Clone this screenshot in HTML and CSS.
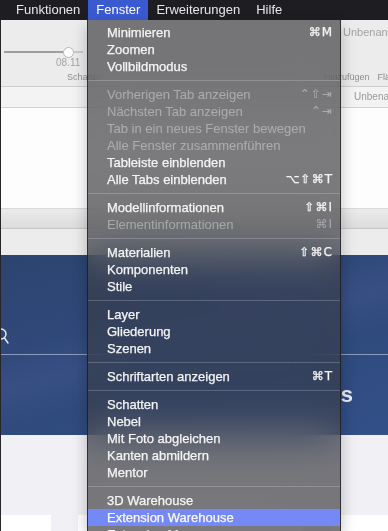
FILE: index.html
```html
<!DOCTYPE html>
<html lang="de">
<head>
    <meta charset="UTF-8">
    <meta name="viewport" content="width=device-width, initial-scale=1.0">
    <title>Fenster</title>
    <link rel="stylesheet" href="styles.css">
</head>
<body>
    <!-- Menüleiste -->
    <div class="menubar">
        <span class="menubar-item">Funktionen</span>
        <span class="menubar-item active">Fenster</span>
        <span class="menubar-item">Erweiterungen</span>
        <span class="menubar-item">Hilfe</span>
    </div>

    <!-- Programmfenster im Hintergrund -->
    <div class="app">
        <div class="toolbar">
            <div class="tool-left">
                <div class="slider">
                    <span class="slider-fill"></span>
                    <span class="slider-knob"></span>
                    <span class="slider-rest"></span>
                </div>
                <div class="slider-value">08.11</div>
                <div class="tool-label">Schatten</div>
            </div>
            <div class="tool-right">
                <div class="window-title">Unbenannt - SketchUp Pro 2019</div>
                <div class="tool-labels">
                    <span>Hinzufügen</span>
                    <span>Flächen</span>
                </div>
            </div>
        </div>

        <div class="tabbar">
            <span class="tab">Unbenannt</span>
        </div>

        <div class="canvas"></div>
        <div class="statusbar"></div>
        <div class="infobar"></div>

        <div class="hero">
            <div class="hero-top">
                <svg class="search-icon" width="12" height="18" viewBox="0 0 12 18">
                    <circle cx="0" cy="6" r="5" fill="none" stroke="#e8ecf5" stroke-width="1.4"/>
                    <line x1="3.5" y1="10" x2="7" y2="15" stroke="#e8ecf5" stroke-width="1.4" stroke-linecap="round"/>
                </svg>
            </div>
            <div class="hero-bottom">
                <span class="hero-title">s</span>
            </div>
        </div>

        <div class="lower">
            <div class="cards">
                <div class="card card-small"></div>
                <div class="card card-wide"></div>
                <div class="card card-side"></div>
            </div>
        </div>
    </div>

    <!-- Geöffnetes Menü "Fenster" -->
    <div class="menu">
        <div class="item"><span>Minimieren</span><span class="key">⌘M</span></div>
        <div class="item"><span>Zoomen</span></div>
        <div class="item"><span>Vollbildmodus</span></div>
        <div class="sep"></div>
        <div class="item disabled"><span>Vorherigen Tab anzeigen</span><span class="key">⌃⇧⇥</span></div>
        <div class="item disabled"><span>Nächsten Tab anzeigen</span><span class="key">⌃⇥</span></div>
        <div class="item disabled"><span>Tab in ein neues Fenster bewegen</span></div>
        <div class="item disabled"><span>Alle Fenster zusammenführen</span></div>
        <div class="item"><span>Tableiste einblenden</span></div>
        <div class="item"><span>Alle Tabs einblenden</span><span class="key">⌥⇧⌘T</span></div>
        <div class="sep"></div>
        <div class="item"><span>Modellinformationen</span><span class="key">⇧⌘I</span></div>
        <div class="item disabled"><span>Elementinformationen</span><span class="key">⌘I</span></div>
        <div class="sep"></div>
        <div class="item"><span>Materialien</span><span class="key">⇧⌘C</span></div>
        <div class="item"><span>Komponenten</span></div>
        <div class="item"><span>Stile</span></div>
        <div class="sep"></div>
        <div class="item"><span>Layer</span></div>
        <div class="item"><span>Gliederung</span></div>
        <div class="item"><span>Szenen</span></div>
        <div class="sep"></div>
        <div class="item"><span>Schriftarten anzeigen</span><span class="key">⌘T</span></div>
        <div class="sep"></div>
        <div class="item"><span>Schatten</span></div>
        <div class="item"><span>Nebel</span></div>
        <div class="item"><span>Mit Foto abgleichen</span></div>
        <div class="item"><span>Kanten abmildern</span></div>
        <div class="item"><span>Mentor</span></div>
        <div class="sep"></div>
        <div class="item"><span>3D Warehouse</span></div>
        <div class="item selected"><span>Extension Warehouse</span></div>
        <div class="item"><span>Extension Manager</span></div>
    </div>
</body>
</html>
```

FILE: styles.css
```css
/* Grundlayout */
* {
    box-sizing: border-box;
}
body {
    margin: 0;
    width: 388px;
    height: 531px;
    overflow: hidden;
    position: relative;
    font-family: "Liberation Sans", "DejaVu Sans", sans-serif;
    background: #f0f0f4;
}

/* Menüleiste */
.menubar {
    height: 20px;
    background: #1d1d22;
    display: flex;
    padding-left: 8px;
    font-size: 13px;
    line-height: 20px;
    color: #e8e8e8;
}
.menubar-item {
    padding: 0 8px;
}
.menubar-item.active {
    background: #3a5bd0;
    color: #fff;
}

/* Programmfenster */
.app {
    display: flex;
    flex-direction: column;
    border-left: 1px solid #26262a;
    height: 511px;
}
.toolbar {
    height: 67px;
    background: #ececec;
    border-bottom: 1px solid #cfcfcf;
    display: flex;
    overflow: hidden;
}
.tool-left {
    width: 90px;
    flex-shrink: 0;
}
.slider {
    display: flex;
    align-items: center;
    height: 12px;
    margin: 26px 0 0 3px;
    width: 79px;
}
.slider-fill {
    width: 59px;
    height: 2px;
    background: #9e9e9e;
}
.slider-knob {
    width: 11px;
    height: 11px;
    border-radius: 50%;
    background: #fff;
    border: 1px solid #b5b5b5;
}
.slider-rest {
    flex: 1;
    height: 2px;
    background: #c9c9c9;
}
.slider-value {
    font-size: 10px;
    line-height: 12px;
    color: #a3a3a3;
    margin: -1px 0 0 55px;
}
.tool-label {
    font-size: 9px;
    line-height: 12px;
    color: #8f8f8f;
    margin: 2px 0 0 66px;
    white-space: nowrap;
}
.tool-right {
    margin-left: auto;
    width: 120px;
    flex-shrink: 0;
    white-space: nowrap;
    overflow: hidden;
}
.window-title {
    font-size: 11px;
    line-height: 16px;
    color: #a2a2a2;
    padding: 4px 0 0 75px;
}
.tool-labels {
    display: flex;
    gap: 8px;
    font-size: 9px;
    line-height: 16px;
    color: #8c8c8c;
    padding: 29px 0 0 56px;
}
.tabbar {
    height: 21px;
    background: #f3f3f3;
    border-bottom: 1px solid #d2d2d2;
    display: flex;
    justify-content: flex-end;
    overflow: hidden;
}
.tab {
    font-size: 10px;
    line-height: 20px;
    color: #9a9a9a;
    width: 34px;
    white-space: nowrap;
    overflow: hidden;
}
.canvas {
    height: 100px;
    background: #fdfdfd;
}
.statusbar {
    height: 21px;
    background: linear-gradient(#ebebeb, #dcdcdc);
    border-top: 1px solid #d9d9d9;
    border-bottom: 1px solid #c7c7c7;
}
.infobar {
    height: 26px;
    background: #ececec;
}

/* Blauer Bereich */
.hero {
    height: 180px;
    background: linear-gradient(165deg, #2b446f 0%, #30497a 35%, #384f84 48%, #2f4a7c 62%, #33508a 100%);
    display: flex;
    flex-direction: column;
}
.hero-top {
    height: 100px;
    border-bottom: 1px solid #8c9cbd;
    display: flex;
    align-items: flex-end;
    padding-bottom: 8px;
}
.search-icon {
    display: block;
}
.hero-bottom {
    flex: 1;
    display: flex;
    justify-content: flex-end;
    align-items: center;
    padding-right: 35px;
}
.hero-title {
    font-size: 22px;
    font-weight: bold;
    color: #e9edf6;
}
.lower {
    flex: 1;
    background: #f1f1f5;
    padding-top: 80px;
}
.cards {
    display: flex;
    gap: 27px;
}
.card {
    height: 16px;
    background: #fff;
}
.card-small {
    width: 52px;
}
.card-wide {
    width: 235px;
}
.card-side {
    width: 60px;
}

/* Aufgeklapptes Menü */
.menu {
    position: absolute;
    top: 20px;
    left: 87px;
    width: 254px;
    height: 511px;
    overflow: hidden;
    padding-top: 4px;
    background: rgba(60, 60, 64, 0.68);
    backdrop-filter: saturate(1.6) blur(22px);
    border-left: 1px solid rgba(20, 20, 24, 0.7);
    border-right: 1px solid rgba(20, 20, 24, 0.7);
    box-shadow: 0 6px 14px rgba(0, 0, 0, 0.25);
    font-size: 13px;
}
.item {
    height: 17px;
    line-height: 17px;
    display: flex;
    justify-content: space-between;
    padding: 0 7px 0 19px;
    color: #f5f5f5;
    -webkit-text-stroke: 0.25px #f5f5f5;
    white-space: nowrap;
}
.item.disabled {
    color: rgba(255, 255, 255, 0.38);
    -webkit-text-stroke: 0;
}
.item.selected {
    background: #7589f6;
    color: #fff;
}
.key {
    font-family: "DejaVu Sans", "Liberation Sans", sans-serif;
    font-size: 12px;
    letter-spacing: 1px;
}
.sep {
    height: 1px;
    margin: 5px 0;
    background: rgba(255, 255, 255, 0.2);
}
```
